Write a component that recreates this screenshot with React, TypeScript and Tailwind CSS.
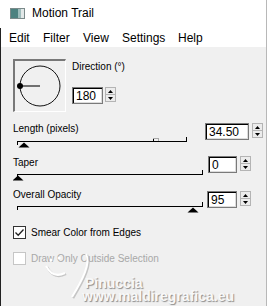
import React from "react";

function Spin() {
  return (
    <div className="w-[11px] h-[15px] flex flex-col bg-[#ececec] border border-[#b4b4b4]">
      <div className="flex-1 flex items-center justify-center border-b border-[#b4b4b4]">
        <svg width="5" height="3" className="block">
          <path d="M2.5 0 L5 3 L0 3 Z" fill="#000" />
        </svg>
      </div>
      <div className="flex-1 flex items-center justify-center">
        <svg width="5" height="3" className="block">
          <path d="M0 0 L5 0 L2.5 3 Z" fill="#000" />
        </svg>
      </div>
    </div>
  );
}

function Field({ value, w }: { value: string; w: string }) {
  return (
    <div
      className={
        "h-[17px] bg-white border border-[#7a7a7a] shadow-[inset_1px_1px_0_#000,inset_-1px_-1px_0_#dcdcdc] flex items-center pl-[3px] pt-[1px] text-[12px] leading-none text-black " +
        w
      }
    >
      {value}
    </div>
  );
}

function Slider({
  end,
  lineY,
  thumbX,
  mid,
}: {
  end: number;
  lineY: number;
  thumbX: number;
  mid?: number;
}) {
  const y = lineY;
  return (
    <svg width="192" height="14" className="block">
      <rect x="4" y={y} width={end - 4 + 1} height="1" fill="#000" />
      <rect x="4" y={y} width="1" height="4" fill="#000" />
      <rect x={end} y={y - 4} width="1" height="5" fill="#000" />
      {mid !== undefined && (
        <g>
          <rect x={mid} y={y - 3} width="1" height="3" fill="#000" />
          <rect x={mid} y={y - 3} width="5" height="1" fill="#a8a8a8" />
          <rect x={mid + 5} y={y - 3} width="1" height="3" fill="#a8a8a8" />
        </g>
      )}
      <path
        d={`M${thumbX} ${y + 1.5} L${thumbX + 5.5} ${y + 6.5} L${thumbX - 5.5} ${y + 6.5} Z`}
        fill="#000"
      />
    </svg>
  );
}

function Check({ checked, disabled }: { checked?: boolean; disabled?: boolean }) {
  return (
    <div
      className={
        disabled
          ? "w-[13px] h-[13px] bg-white border border-[#c6c6c6]"
          : "w-[13px] h-[13px] bg-white border border-[#333333] flex items-center justify-center"
      }
    >
      {checked && (
        <svg width="11" height="11" className="block">
          <path d="M1.5 5.5 L4.2 8.3 L9.5 2.5" stroke="#222" strokeWidth="1.3" fill="none" />
        </svg>
      )}
    </div>
  );
}

export default function App() {
  return (
    <div className="w-[267px] h-[306px] overflow-hidden relative bg-[#f0f0f0] border-r border-[#b8b8b8] font-['Liberation_Sans',Arial,sans-serif] text-black">
      {/* Title bar */}
      <div className="h-[28px] bg-white flex items-center pl-[10px] pb-[2px]">
        <svg width="15" height="11" className="block">
          <rect x="0.5" y="0.5" width="14" height="10" fill="#e2e8e8" stroke="#7b8a8a" />
          <rect x="1" y="1" width="7" height="9" fill="#4c8280" />
          <rect x="8" y="1" width="3" height="9" fill="#9dbcbb" />
        </svg>
        <span className="ml-[7px] text-[12px] leading-none">Motion Trail</span>
      </div>

      {/* Menu bar */}
      <div className="h-[19px] bg-white flex items-center border-l border-[#222] pl-[8px] text-[12px] leading-none">
        <span className="w-[34px]">Edit</span>
        <span className="w-[40px]">Filter</span>
        <span className="w-[39px]">View</span>
        <span className="w-[56px]">Settings</span>
        <span>Help</span>
      </div>

      {/* Content */}
      <div className="h-[259px] border-l border-[#222] text-[10px] leading-[12px]">
        {/* Direction */}
        <div className="flex pt-[12px] pl-[12px]">
          <div className="w-[53px] h-[53px] border-t-2 border-l-2 border-r border-b border-t-[#787878] border-l-[#787878] border-r-white border-b-white">
            <svg width="50" height="50" className="block">
              <line x1="5" y1="25" x2="25" y2="25" stroke="#707070" strokeWidth="2" />
              <circle cx="25" cy="25" r="20" stroke="#111" strokeWidth="1" fill="none" />
              <circle cx="5" cy="25" r="3" fill="#000" />
            </svg>
          </div>
          <div className="ml-[6px] flex flex-col">
            <div className="mt-[2px] h-[12px]">Direction (°)</div>
            <div className="mt-[14px] flex">
              <Field value="180" w="w-[31px]" />
              <div className="ml-[2px]">
                <Spin />
              </div>
            </div>
          </div>
        </div>

        {/* Length */}
        <div className="flex mt-[11px]">
          <div className="ml-[12px] w-[192px]">
            <div className="h-[12px]">Length (pixels)</div>
            <Slider end={173} lineY={6} thumbX={11} mid={140} />
          </div>
          <div className="ml-auto mr-[15px] flex">
            <Field value="34.50" w="w-[44px]" />
            <div className="ml-[3px]">
              <Spin />
            </div>
          </div>
        </div>

        {/* Taper */}
        <div className="flex mt-[7px]">
          <div className="ml-[12px] w-[192px]">
            <div className="h-[12px] mt-[1px]">Taper</div>
            <Slider end={189} lineY={5} thumbX={5} />
          </div>
          <div className="ml-auto mr-[15px] flex">
            <Field value="0" w="w-[29px]" />
            <div className="ml-[3px]">
              <Spin />
            </div>
          </div>
        </div>

        {/* Overall Opacity */}
        <div className="flex mt-[6px]">
          <div className="ml-[12px] w-[192px]">
            <div className="h-[12px]">Overall Opacity</div>
            <Slider end={189} lineY={5} thumbX={180} />
          </div>
          <div className="ml-auto mr-[15px] flex mt-[2px]">
            <Field value="95" w="w-[30px]" />
            <div className="ml-[3px]">
              <Spin />
            </div>
          </div>
        </div>

        {/* Checkboxes */}
        <div className="flex items-center mt-[11px] ml-[12px]">
          <Check checked />
          <span className="ml-[5px]">Smear Color from Edges</span>
        </div>
        <div className="flex items-center mt-[13px] ml-[12px]">
          <Check disabled />
          <span className="ml-[5px] text-[#a8a8a8]">Draw Only Outside Selection</span>
        </div>
      </div>

      {/* Watermark overlay */}
      <svg width="100" height="60" className="absolute left-[20px] top-[248px]">
        <path d="M67 7 C72 16, 64 32, 53 50" stroke="#9a9a9a" strokeWidth="2.5" fill="none" opacity="0.5" />
        <path d="M66 6 C71 15, 63 31, 52 49" stroke="#ffffff" strokeWidth="2" fill="none" />
        <path d="M27 19 Q34 32 46 26" stroke="#9a9a9a" strokeWidth="2.5" fill="none" opacity="0.5" />
        <path d="M26 18 Q33 31 45 25" stroke="#ffffff" strokeWidth="2" fill="none" />
        <circle cx="31" cy="12" r="1.5" fill="#ffffff" />
        <circle cx="39" cy="10" r="1.5" fill="#ffffff" />
      </svg>
      <div className="absolute left-[85px] top-[277px] text-[14px] leading-[12px] font-bold text-[#f8f8f8] [text-shadow:1px_1px_1px_#8c8c8c]">
        Pinuccia
      </div>
      <div className="absolute left-[82px] top-[290px] text-[14px] leading-[12px] font-bold text-[#f8f8f8] [text-shadow:1px_1px_1px_#8c8c8c]">
        www.maldiregrafica.eu
      </div>
    </div>
  );
}
